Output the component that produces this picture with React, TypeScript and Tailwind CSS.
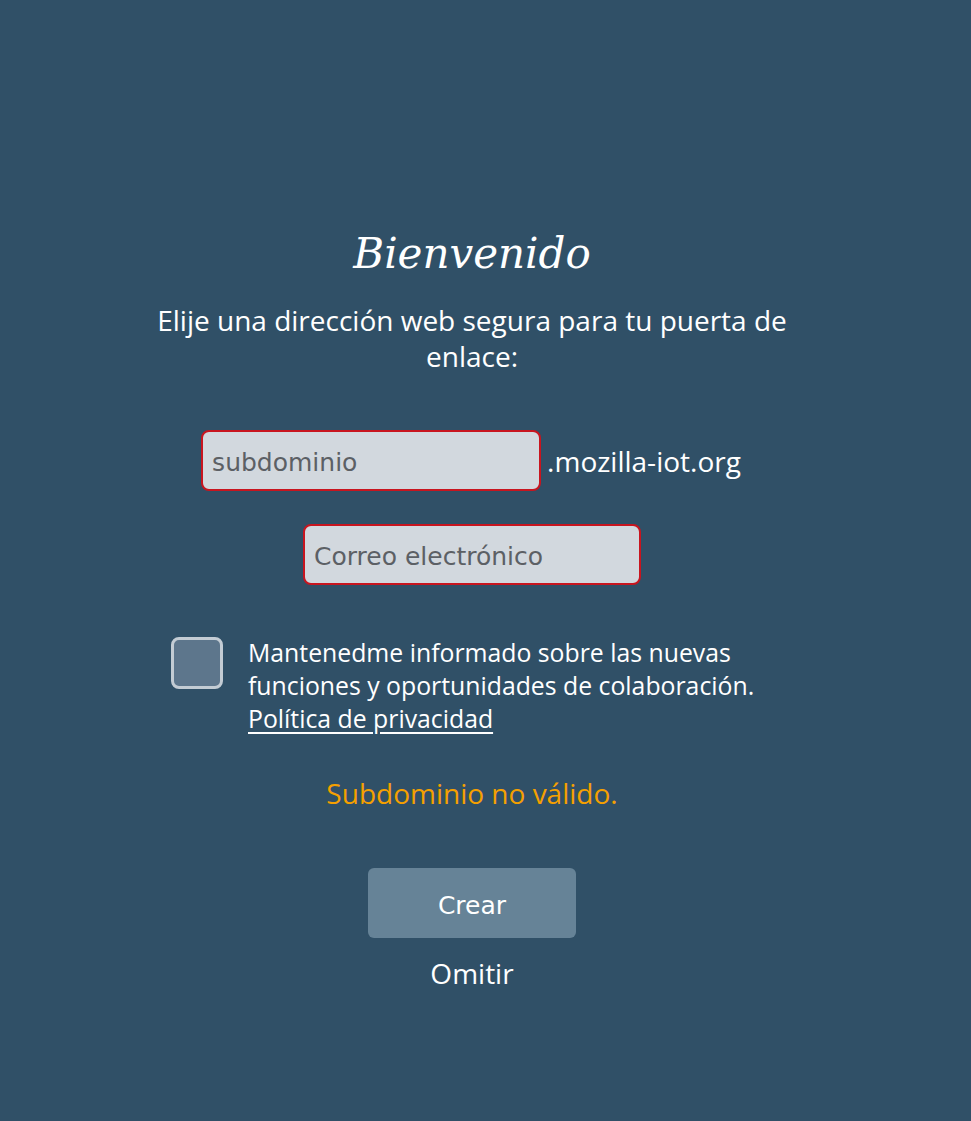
export default function App() {
  return (
    <div className="min-h-[1121px] w-[971px] bg-[#305067] text-white">
      <div className="w-[944px] flex flex-col items-center pt-[224px] font-['Open_Sans',sans-serif]">
        <h1 className="font-['DejaVu_Serif',serif] italic text-[42px] leading-[60px] font-normal">Bienvenido</h1>
        <p className="mt-[18px] w-[680px] text-center text-[28px] leading-[36px]">
          Elije una dirección web segura para tu puerta de enlace:
        </p>
        <div className="mt-[56px] flex items-center -ml-[2px]">
          <input
            placeholder="subdominio"
            className="w-[340px] h-[61px] rounded-[8px] border-2 border-[#c8151f] bg-[#d2d8de] pl-[9px] pt-[3px] text-[25px] text-[#333] placeholder:text-[#5c6065] font-['DejaVu_Sans',sans-serif] outline-none"
          />
          <span className="ml-[6px] text-[28px]">.mozilla-iot.org</span>
        </div>
        <input
          placeholder="Correo electrónico"
          className="mt-[33px] w-[338px] h-[61px] rounded-[8px] border-2 border-[#c8151f] bg-[#d2d8de] pl-[9px] pt-[3px] text-[25px] text-[#333] placeholder:text-[#5c6065] font-['DejaVu_Sans',sans-serif] outline-none"
        />
        <div className="mt-[52px] flex items-start w-[600px] -ml-[2px]">
          <div className="w-[52px] h-[52px] shrink-0 rounded-[8px] border-[3px] border-[#c3ccd4] bg-[#5d768c]" />
          <div className="ml-[25px] w-[530px] text-[24.8px] leading-[33px] -mt-[1px]">
            Mantenedme informado sobre las nuevas funciones y oportunidades de colaboración.
            <br />
            <a href="#" className="underline underline-offset-[4px]">Política de privacidad</a>
          </div>
        </div>
        <div className="mt-[40px] text-[28px] leading-[36px] text-[#f5a000]">Subdominio no válido.</div>
        <button className="mt-[57px] w-[208px] h-[70px] rounded-[6px] bg-[#668397] pt-[5px] text-[25px] text-white font-['DejaVu_Sans',sans-serif]">
          Crear
        </button>
        <button className="mt-[17px] text-[28px] leading-[36px]">Omitir</button>
      </div>
    </div>
  )
}
